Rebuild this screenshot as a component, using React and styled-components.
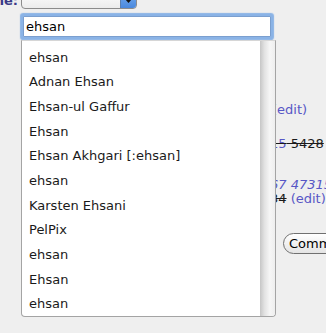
import React from 'react';
import styled, { createGlobalStyle } from 'styled-components';

const Global = createGlobalStyle`
  html, body { margin: 0; padding: 0; background: #efefef; overflow: hidden; }
  body { font-family: "DejaVu Sans", Verdana, sans-serif; }
`;

const Page = styled.div`
  width: 326px;
  height: 333px;
  overflow: hidden;
  display: flex;
  flex-direction: column;
`;

const FieldRow = styled.div`
  display: flex;
  align-items: flex-start;
  height: 19px;
  margin-top: -10px;
`;

const Label = styled.label`
  width: 18px;
  display: flex;
  justify-content: flex-end;
  white-space: nowrap;
  font-size: 13px;
  font-weight: bold;
  color: #3a3a86;
  padding-top: 3px;
  line-height: 15px;
`;

const Select = styled.div`
  margin-left: 3px;
  width: 116px;
  height: 19px;
  box-sizing: border-box;
  border: 1px solid #8c8c8c;
  border-radius: 4px;
  background: linear-gradient(#ffffff, #ececec);
  display: flex;
  align-items: center;
  overflow: hidden;
`;

const SelectText = styled.span`
  padding-left: 8px;
  font-size: 12px;
  letter-spacing: 2.5px;
  color: #222;
  line-height: 17px;
  margin-top: -2px;
`;

const SelectArrow = styled.span`
  margin-left: auto;
  width: 15px;
  height: 100%;
  background: linear-gradient(#a9cdf7, #5f9ae6 55%, #4a88dd);
  border-left: 1px solid #5a7fb0;
  display: flex;
  align-items: center;
  justify-content: center;
  svg { margin-top: 2px; }
`;

const AutoWrap = styled.div`
  position: relative;
  margin-left: 20px;
  margin-top: 4px;
  width: 254px;
  height: 27px;
  padding: 3px;
  box-sizing: border-box;
`;

const Input = styled.input`
  display: block;
  width: 100%;
  height: 21px;
  box-sizing: border-box;
  margin: 0;
  border: 1px solid #7b9fcf;
  box-shadow: 0 0 1px 3px rgba(120, 168, 228, 0.85);
  border-radius: 1px;
  padding: 0 2px;
  font-family: "DejaVu Sans", Verdana, sans-serif;
  font-size: 13px;
  color: #000;
  background: #fff;
  outline: none;
`;

const Dropdown = styled.div`
  position: absolute;
  top: 100%;
  left: 1px;
  width: 255px;
  height: 277px;
  box-sizing: border-box;
  border: 1px solid #a4a4a4;
  border-top: 1px solid #d6d6d6;
  border-radius: 0 0 4px 4px;
  background: #fff;
  display: flex;
  overflow: hidden;
  z-index: 2;
`;

const List = styled.ul`
  flex: 1;
  margin: 0;
  padding: 4.5px 0 0;
  list-style: none;
  overflow: hidden;
`;

const Item = styled.li`
  height: 24.7px;
  line-height: 24.7px;
  padding-left: 7px;
  font-size: 13px;
  color: #1a1a1a;
  white-space: nowrap;
  overflow: hidden;
`;

const Track = styled.div`
  width: 15px;
  background: linear-gradient(to right, #c6c6c6, #e2e2e2 30%, #f6f6f6 65%, #eeeeee);
`;

const Details = styled.div`
  margin-left: 270px;
  font-size: 13px;
  color: #1a1a1a;
  white-space: nowrap;
  display: flex;
  flex-direction: column;
  align-items: flex-start;
`;

const Line = styled.div`
  margin-top: ${p => p.$top}px;
  padding-left: ${p => p.$indent || 0}px;
  line-height: ${p => p.$lh || 15}px;
`;

const Link = styled.a`
  color: #5757c6;
  text-decoration: none;
  font-style: ${p => (p.$italic ? 'italic' : 'normal')};
`;

const Del = styled.del`
  color: #1a1a1a;
  text-decoration: line-through;
`;

const Button = styled.button`
  margin-top: 27px;
  margin-left: 13px;
  height: 21px;
  box-sizing: border-box;
  border: 1px solid #707070;
  border-radius: 10.5px;
  background: linear-gradient(#ffffff, #e4e4e4);
  padding: 0 5px;
  font-family: "DejaVu Sans", Verdana, sans-serif;
  font-size: 13px;
  color: #000;
  white-space: nowrap;
`;

const items = [
  'ehsan',
  'Adnan Ehsan',
  'Ehsan-ul Gaffur',
  'Ehsan',
  'Ehsan Akhgari [:ehsan]',
  'ehsan',
  'Karsten Ehsani',
  'PelPix',
  'ehsan',
  'Ehsan',
  'ehsan',
];

export default function App() {
  return (
    <Page>
      <Global />
      <FieldRow>
        <Label>Name:</Label>
        <Select>
          <SelectText>---</SelectText>
          <SelectArrow>
            <svg width="7" height="4" viewBox="0 0 7 4">
              <path d="M0 0h7L3.5 4z" fill="#111" />
            </svg>
          </SelectArrow>
        </Select>
      </FieldRow>
      <AutoWrap>
        <Input defaultValue="ehsan" />
        <Dropdown>
          <List>
            {items.map((t, i) => (
              <Item key={i}>{t}</Item>
            ))}
          </List>
          <Track />
        </Dropdown>
      </AutoWrap>
      <Details>
        <Line $top={61.5} $indent={2}>
          <Link>(edit)</Link>
        </Line>
        <Line $top={19}>
          <Del><Link>15</Link> 5428</Del>
        </Line>
        <Line $top={27.5} $lh={14}>
          <div><Link $italic>67 47315</Link></div>
          <div><Del>34</Del> <Link>(edit)</Link></div>
        </Line>
        <Button>Commit</Button>
      </Details>
    </Page>
  );
}
